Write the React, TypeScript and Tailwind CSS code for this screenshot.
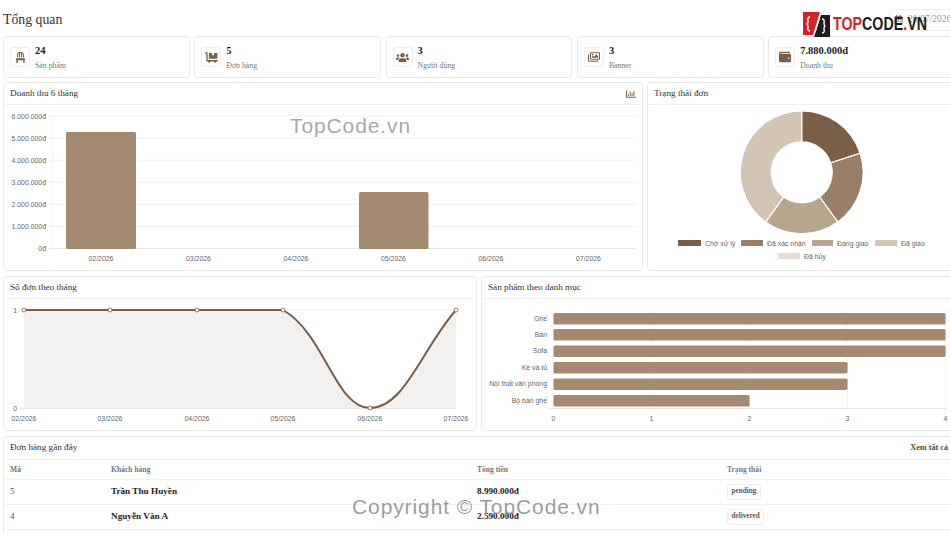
import { FaChair, FaDollyFlatbed, FaUsers, FaRegImages, FaWallet, FaRegChartBar, FaRegCalendarAlt } from 'react-icons/fa';

const serif = "font-['Liberation_Serif','Times_New_Roman',serif]";

const stats = [
  { icon: <FaChair size={11} />, value: '24', label: 'Sản phẩm' },
  { icon: <FaDollyFlatbed size={13} />, value: '5', label: 'Đơn hàng' },
  { icon: <FaUsers size={13} />, value: '3', label: 'Người dùng' },
  { icon: <FaRegImages size={12} />, value: '3', label: 'Banner' },
  { icon: <FaWallet size={12} />, value: '7.880.000đ', label: 'Doanh thu' },
];

const orders = [
  { id: 5, name: 'Trần Thu Huyền', total: '8.990.000đ', status: 'pending' },
  { id: 4, name: 'Nguyễn Văn A', total: '2.590.000đ', status: 'delivered' },
];

const MONTHS = ['02/2026', '03/2026', '04/2026', '05/2026', '06/2026', '07/2026'];
const LABEL = { fontFamily: "'Liberation Sans', Arial, sans-serif", fontSize: 6.9, fill: '#666' };

function Card({ title, action, className, children }: { title: string; action?: React.ReactNode; className?: string; children: React.ReactNode }) {
  return (
    <div className={`bg-white border border-[#e9e9e7] rounded-[4px] overflow-hidden shrink-0 ${className ?? ''}`}>
      <div className="h-[22px] flex items-center justify-between px-[6px] pt-[1px] border-b border-[#f0f0ee] text-[9.2px] text-[#333]">
        <span>{title}</span>
        {action}
      </div>
      {children}
    </div>
  );
}

function RevenueChart() {
  const ticks = ['6.000.000đ', '5.000.000đ', '4.000.000đ', '3.000.000đ', '2.000.000đ', '1.000.000đ', '0đ'];
  return (
    <svg width="638" height="166" viewBox="4 105 638 166" className="block">
      {ticks.map((t, i) => {
        const y = 116 + i * 22.1;
        return (
          <g key={t}>
            <line x1="48" x2="636" y1={y} y2={y} stroke={i === 6 ? '#e4e4e4' : '#f1f1f1'} />
            <text x="46" y={y + 2.5} textAnchor="end" {...LABEL}>{t}</text>
          </g>
        );
      })}
      <line x1="52.5" x2="52.5" y1="116" y2="249" stroke="#f1f1f1" />
      <rect x="66" y="132" width="70" height="117" rx="1.5" fill="#a58a72" />
      <rect x="359" y="192" width="69.5" height="57" rx="1.5" fill="#a58a72" />
      {MONTHS.map((m, i) => (
        <text key={m} x={101 + i * 97.5} y="261" textAnchor="middle" {...LABEL}>{m}</text>
      ))}
    </svg>
  );
}

function polar(cx: number, cy: number, r: number, deg: number) {
  const a = ((deg - 90) * Math.PI) / 180;
  return [cx + r * Math.cos(a), cy + r * Math.sin(a)];
}

function arc(from: number, to: number) {
  const cx = 801.7, cy = 172.3, R = 61.5, r = 30.5;
  const [x1, y1] = polar(cx, cy, R, from);
  const [x2, y2] = polar(cx, cy, R, to);
  const [x3, y3] = polar(cx, cy, r, to);
  const [x4, y4] = polar(cx, cy, r, from);
  const big = to - from > 180 ? 1 : 0;
  return `M${x1} ${y1}A${R} ${R} 0 ${big} 1 ${x2} ${y2}L${x3} ${y3}A${r} ${r} 0 ${big} 0 ${x4} ${y4}Z`;
}

function StatusChart() {
  const slices = [
    { from: 0, to: 72, color: '#7a5f48' },
    { from: 72, to: 144, color: '#9a7f68' },
    { from: 144, to: 216, color: '#b8a58e' },
    { from: 216, to: 360, color: '#d4c4b4' },
  ];
  const legend = [
    { x: 678, y: 243, w: 23, color: '#7a5f48', text: 'Chờ xử lý' },
    { x: 741, y: 243, w: 22, color: '#9a7f68', text: 'Đã xác nhận' },
    { x: 812, y: 243, w: 21, color: '#b8a58e', text: 'Đang giao' },
    { x: 875, y: 243, w: 22, color: '#d4c4b4', text: 'Đã giao' },
    { x: 778, y: 256, w: 22, color: '#e5ddd5', text: 'Đã hủy' },
  ];
  return (
    <svg width="307" height="166" viewBox="648 105 307 166" className="block">
      {slices.map((s) => (
        <path key={s.from} d={arc(s.from, s.to)} fill={s.color} stroke="#fff" strokeWidth="1.2" />
      ))}
      {legend.map((l) => (
        <g key={l.text}>
          <rect x={l.x} y={l.y - 3} width={l.w} height="6" fill={l.color} />
          <text x={l.x + l.w + 4} y={l.y + 2.5} {...LABEL}>{l.text}</text>
        </g>
      ))}
    </svg>
  );
}

function OrdersChart() {
  const xs = [24, 110, 197, 283, 370, 456];
  const curve = 'M24 310L283 310C324.8 333.7 335.4 408 370 408C404.6 408 421.6 349.2 456 310';
  return (
    <svg width="472" height="132" viewBox="4 299 472 132" className="block">
      <line x1="20" x2="456" y1="310" y2="310" stroke="#f1f1f1" />
      <path d={`${curve}L456 408L24 408Z`} fill="#f3f1ef" />
      <line x1="20" x2="456" y1="408.5" y2="408.5" stroke="#e4e4e4" />
      <path d={curve} fill="none" stroke="#7a5f48" strokeWidth="2" />
      {xs.map((x, i) => (
        <circle key={x} cx={x} cy={i === 4 ? 408 : 310} r="2" fill="#fff" stroke="#7a5f48" strokeWidth="0.8" />
      ))}
      <text x="17" y="313" textAnchor="end" {...LABEL}>1</text>
      <text x="17" y="411" textAnchor="end" {...LABEL}>0</text>
      {MONTHS.map((m, i) => (
        <text key={m} x={xs[i]} y="421" textAnchor="middle" {...LABEL}>{m}</text>
      ))}
    </svg>
  );
}

function CategoryChart() {
  const rows = [
    { name: 'Ghế', y: 313, n: 4 },
    { name: 'Bàn', y: 329, n: 4 },
    { name: 'Sofa', y: 345.5, n: 4 },
    { name: 'Kệ và tủ', y: 362, n: 3 },
    { name: 'Nội thất văn phòng', y: 378.5, n: 3 },
    { name: 'Bộ bàn ghế', y: 395, n: 2 },
  ];
  const x = (n: number) => 553.5 + n * 98;
  return (
    <svg width="473" height="132" viewBox="482 299 473 132" className="block">
      {[0, 1, 2, 3, 4].map((n) => (
        <g key={n}>
          <line x1={x(n)} x2={x(n)} y1="310" y2="412" stroke="#f1f1f1" />
          <text x={x(n)} y="421" textAnchor="middle" {...LABEL}>{n}</text>
        </g>
      ))}
      <line x1="549" x2="946" y1="408.5" y2="408.5" stroke="#e4e4e4" />
      {rows.map((r) => (
        <g key={r.name}>
          <rect x="553.5" y={r.y} width={x(r.n) - 553.5} height="11.5" rx="1.5" fill="#a58a72" />
          <text x="547" y={r.y + 7.5} textAnchor="end" {...LABEL}>{r.name}</text>
        </g>
      ))}
    </svg>
  );
}

export default function App() {
  return (
    <div className={`relative w-[950px] h-[533px] overflow-hidden bg-white ${serif} text-[#222]`}>
      <div className="w-[952px] ml-[3px]">
        <div className="h-[36px] flex items-center justify-between pt-[3px]">
          <h1 className="text-[13.8px] font-normal text-[#333] mt-[2px]">Tổng quan</h1>
          <div className="h-[22px] w-[72px] mr-[-6px] shrink-0 flex items-center gap-[5px] pl-[4px] border border-[#eee] rounded-[3px] text-[9.5px] text-[#999]">
            <FaRegCalendarAlt size={9} className="text-[#7a5f48] shrink-0" />
            <span className="whitespace-nowrap">20/07/2026</span>
          </div>
        </div>

        <div className="grid grid-cols-5 gap-[4.5px]">
          {stats.map((s) => (
            <div key={s.label} className="h-[42px] flex items-center gap-[5px] px-[6px] border border-[#e9e9e7] rounded-[4px] bg-white">
              <div className="w-[20px] h-[20px] flex items-center justify-center border border-[#eeeeec] rounded-[3px] text-[#7a5f48]">
                {s.icon}
              </div>
              <div>
                <div className="text-[10.5px] font-bold leading-[13px] text-[#222]">{s.value}</div>
                <div className="text-[7.8px] leading-[11px] mt-[3px] text-[#777]">{s.label}</div>
              </div>
            </div>
          ))}
        </div>

        <div className="flex gap-[4px] mt-[4px]">
          <Card title="Doanh thu 6 tháng" className="w-[640px] h-[189px]" action={<FaRegChartBar size={10} className="text-[#7a5f48]" />}>
            <RevenueChart />
          </Card>
          <Card title="Trạng thái đơn" className="w-[309px] h-[189px]">
            <StatusChart />
          </Card>
        </div>

        <div className="flex gap-[4px] mt-[5px]">
          <Card title="Số đơn theo tháng" className="w-[474px] h-[155px]">
            <OrdersChart />
          </Card>
          <Card title="Sản phẩm theo danh mục" className="w-[475px] h-[155px]">
            <CategoryChart />
          </Card>
        </div>

        <div className="mt-[5px] h-[120px] border border-[#e9e9e7] rounded-[4px] bg-white">
          <div className="h-[23px] flex items-center justify-between px-[6px] border-b border-[#f0f0ee] text-[9.2px] text-[#333]">
            <span>Đơn hàng gần đây</span>
            <a className="text-[8.2px] font-bold text-[#5c4a3a]">Xem tất cả</a>
          </div>
          <table className="w-full table-fixed text-[9.2px]">
            <thead>
              <tr className="h-[19px] border-b border-[#f0f0ee] text-left text-[7.6px] text-[#777]">
                <th className="w-[106px] pl-[6px] font-bold">Mã</th>
                <th className="w-[367px] pl-[1px] font-bold">Khách hàng</th>
                <th className="w-[250px] font-bold">Tổng tiền</th>
                <th className="font-bold">Trạng thái</th>
              </tr>
            </thead>
            <tbody>
              {orders.map((o) => (
                <tr key={o.id} className="h-[25px] border-b border-[#f0f0ee]">
                  <td className="pl-[6px] text-[#555]">{o.id}</td>
                  <td className="pl-[1px] font-bold">{o.name}</td>
                  <td className="font-bold">{o.total}</td>
                  <td>
                    <span className="inline-block px-[3.5px] py-[1.5px] border border-[#eeeeec] rounded-[3px] text-[7.2px] leading-[11px] font-bold text-[#6b5744]">{o.status}</span>
                  </td>
                </tr>
              ))}
            </tbody>
          </table>
        </div>
      </div>

      {/* watermarks */}
      <div className="absolute left-[290px] top-[115px] font-['Liberation_Sans',Arial,sans-serif] text-[21px] leading-none tracking-[0.9px] text-[#8f8f8f]/80">TopCode.vn</div>
      <div className="absolute left-[352px] top-[496px] font-['Liberation_Sans',Arial,sans-serif] text-[21px] leading-none tracking-[0.9px] text-[#8a8a8a]/85 whitespace-nowrap">Copyright © TopCode.vn</div>
      <div className="absolute left-[803px] top-[12px] flex items-center">
        <svg width="27" height="25" viewBox="0 0 27 25" className="block">
          <path d="M0 0H17L10 23H0Z" fill="#d2232a" />
          <path d="M18 3H27V25H11Z" fill="#1d1d1b" />
          <path d="M7 5Q4 5 5 9Q5 12 3.5 12Q5 12 5 15Q4 19 7 19" fill="none" stroke="#fff" strokeWidth="1.4" />
          <path d="M19 7Q22 7 21 11Q21 14 22.5 14Q21 14 21 17Q22 21 19 21" fill="none" stroke="#fff" strokeWidth="1.4" />
          <path d="M16 7L12 20" stroke="#fff" strokeWidth="1.4" />
        </svg>
        <span className="ml-[3px] font-['Liberation_Sans',Arial,sans-serif] font-bold text-[18.5px] leading-none [transform:scaleX(0.77)] origin-left whitespace-nowrap">
          <span className="text-[#d2232a]">TOP</span>
          <span className="text-[#1d1d1b]">CODE</span>
          <span className="text-[#d2232a]">.</span>
          <span className="text-[#1d1d1b]">VN</span>
        </span>
      </div>
    </div>
  );
}
